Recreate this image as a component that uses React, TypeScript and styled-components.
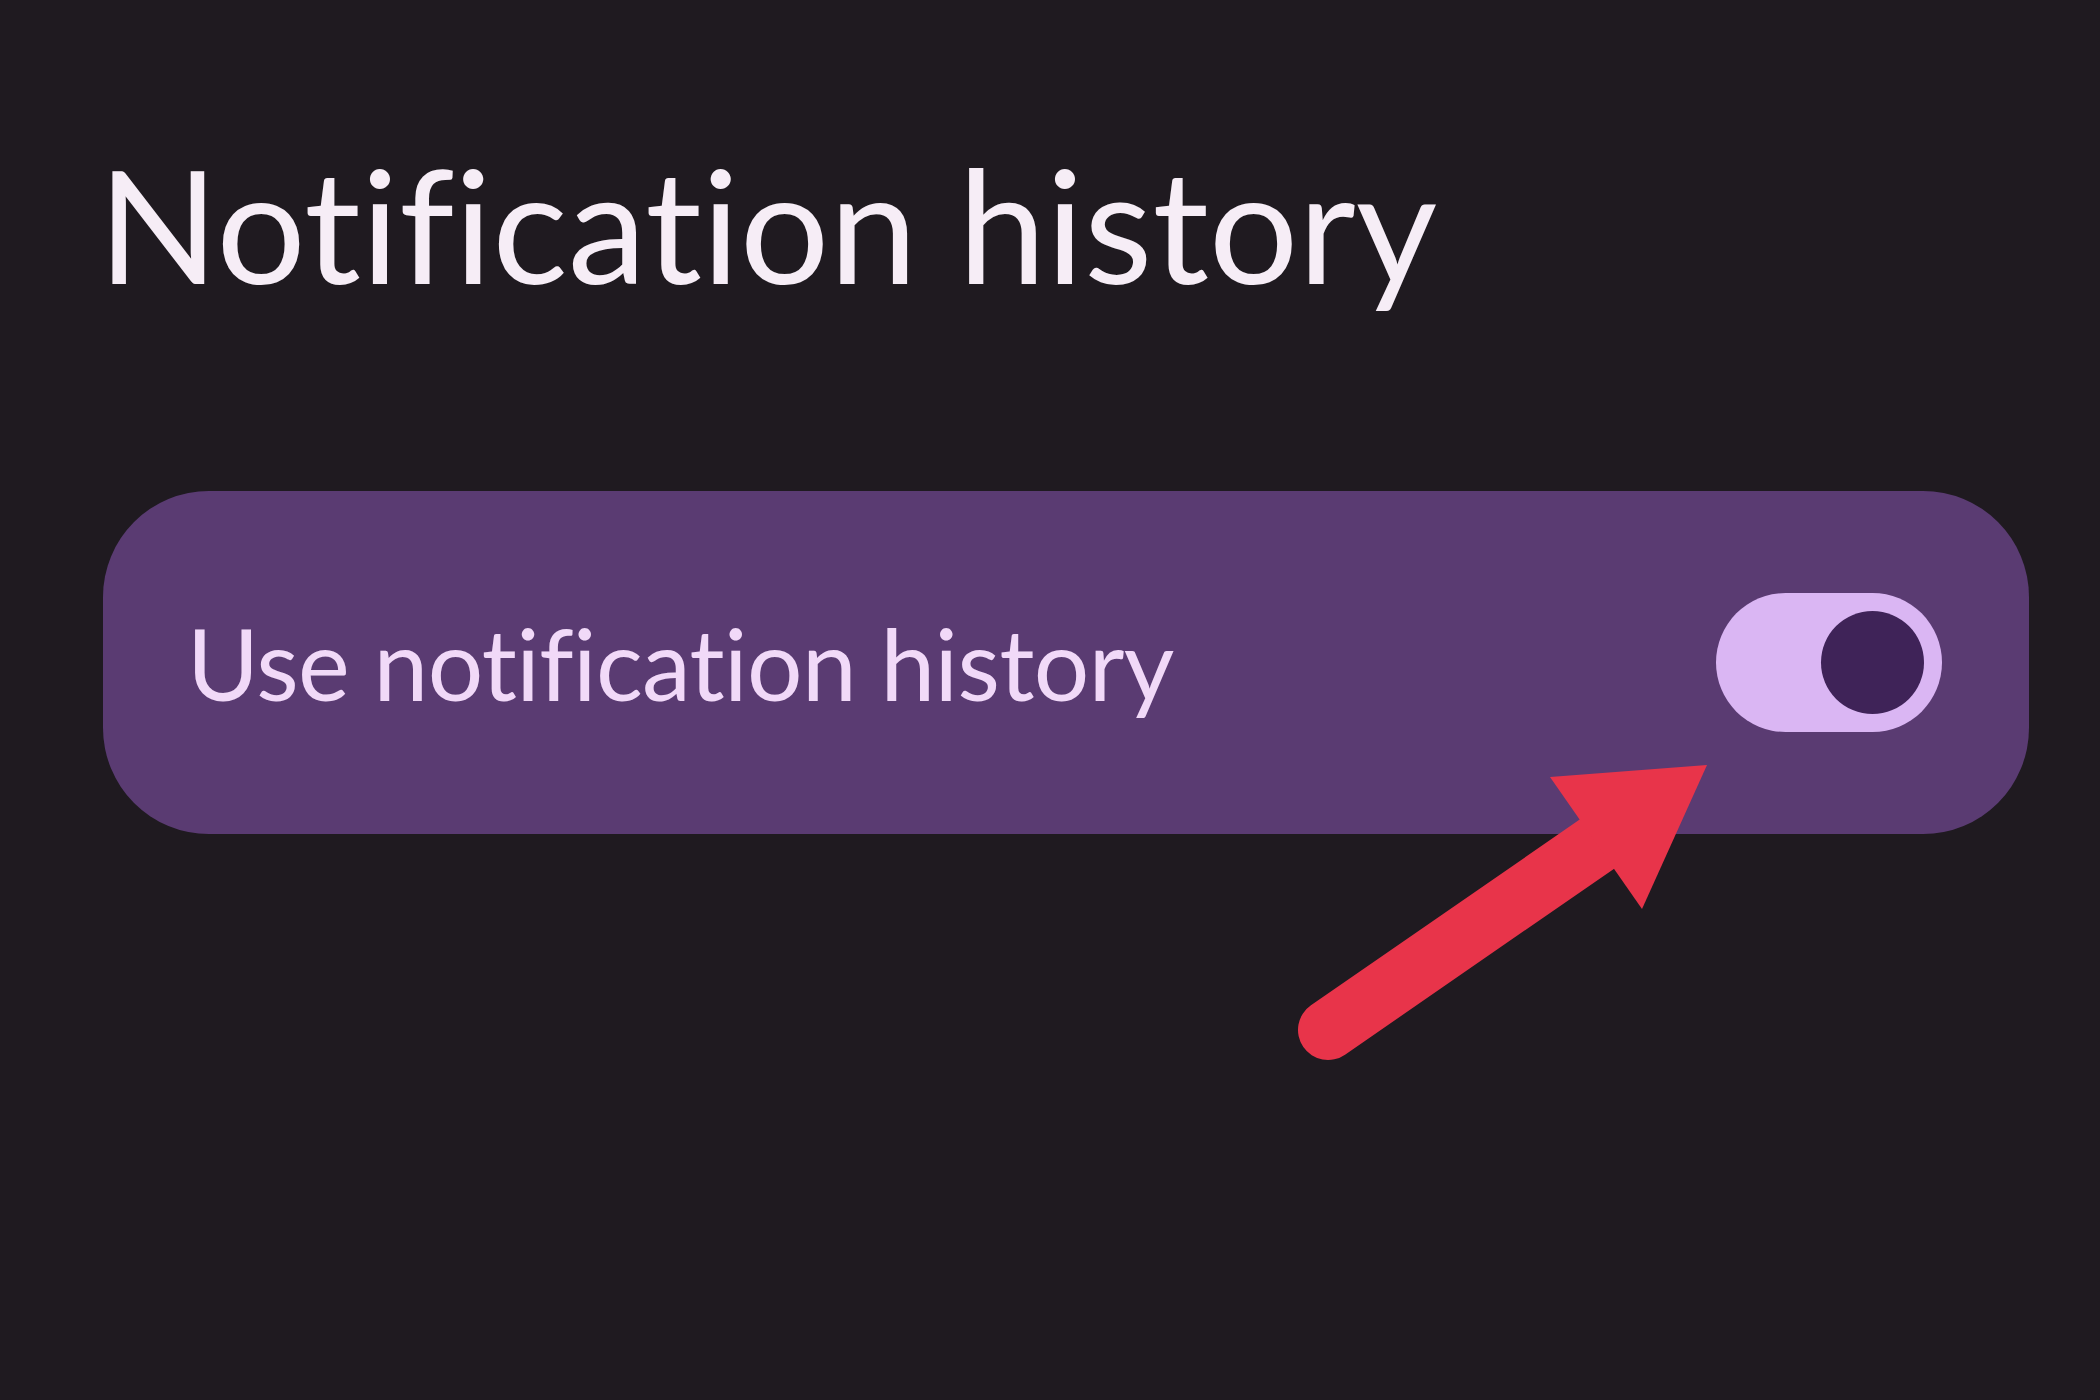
import React, { useState } from "react";
import styled, { createGlobalStyle } from "styled-components";

const GlobalStyle = createGlobalStyle`
  html, body {
    margin: 0;
    padding: 0;
    background: #1f1a20;
  }
  body {
    font-family: "Lato", "Noto Sans", sans-serif;
    font-variant-ligatures: none;
  }
`;

const Page = styled.div`
  position: relative;
  width: 2100px;
  height: 1400px;
  overflow: hidden;
  background: #1f1a20;
  padding: 144px 71px 0 103px;
  box-sizing: border-box;
  display: flex;
  flex-direction: column;
`;

const Title = styled.h1`
  margin: 0 0 0 -5px;
  font-size: 158px;
  line-height: 1;
  font-weight: 400;
  color: #f6edf6;
  letter-spacing: 0;
`;

const Card = styled.div`
  margin-top: 189px;
  height: 343px;
  border-radius: 106px;
  background: #5a3b72;
  display: flex;
  align-items: center;
  justify-content: space-between;
  padding: 0 87px 0 84px;
`;

const Label = styled.span`
  font-size: 98px;
  line-height: 1;
  color: #f1d9f8;
  letter-spacing: -0.6px;
`;

const Track = styled.div<{ $on: boolean }>`
  box-sizing: border-box;
  width: 226px;
  height: 139px;
  border-radius: 70px;
  background: ${(p) => (p.$on ? "#dab6f3" : "#4a4458")};
  padding: 0 18px;
  display: flex;
  align-items: center;
  justify-content: ${(p) => (p.$on ? "flex-end" : "flex-start")};
  cursor: pointer;
`;

const Thumb = styled.span`
  display: block;
  width: 103px;
  height: 103px;
  border-radius: 50%;
  background: #3f2358;
`;

const Overlay = styled.svg`
  position: absolute;
  left: 0;
  top: 0;
  pointer-events: none;
`;

const App: React.FC = () => {
  const [on, setOn] = useState(true);

  return (
    <>
      <GlobalStyle />
      <Page>
        <Title>Notification history</Title>
        <Card>
          <Label>Use notification history</Label>
          <Track
            $on={on}
            role="switch"
            aria-checked={on}
            onClick={() => setOn((v) => !v)}
          >
            <Thumb />
          </Track>
        </Card>
        {/* annotation arrow pointing at the switch */}
        <Overlay width="2100" height="1400" viewBox="0 0 2100 1400">
          <line
            x1="1328"
            y1="1030"
            x2="1600"
            y2="842"
            stroke="#e8344a"
            strokeWidth="60"
            strokeLinecap="round"
          />
          <polygon points="1707,765 1550,777 1642,909" fill="#e8344a" />
        </Overlay>
      </Page>
    </>
  );
};

export default App;
